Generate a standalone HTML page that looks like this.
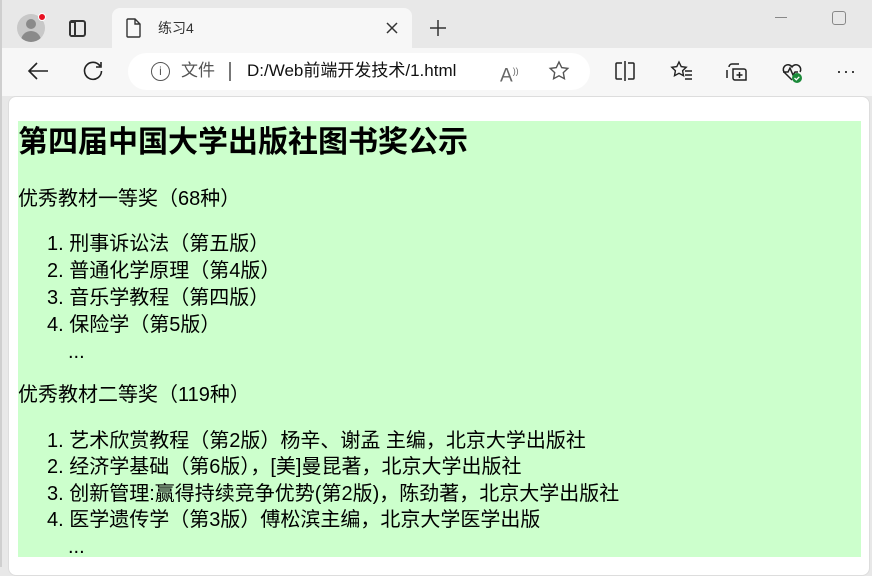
<!DOCTYPE html>
<html><head><meta charset="utf-8"><style>
*{margin:0;padding:0;box-sizing:border-box}
body{width:872px;height:567px;overflow:hidden;background:#e8e8e8;font-family:"Liberation Sans","Noto Sans CJK SC",sans-serif;position:relative}
.a{position:absolute}
.t{position:absolute;white-space:nowrap;font-size:20px;color:#000;line-height:22px}
svg{position:absolute}
</style></head><body>
<div class="a" style="left:0;top:0;width:872px;height:48px;background:#e8e8e8"></div>
<div class="a" style="left:0;top:0;width:2px;height:567px;background:#cfcfcf"></div>
<div class="a" style="left:17px;top:14px;width:28px;height:28px;border-radius:50%;background:#c8c8c8;overflow:hidden">
 <div class="a" style="left:9px;top:5px;width:10px;height:10px;border-radius:50%;background:#8a8a8a"></div>
 <div class="a" style="left:4px;top:17px;width:20px;height:14px;border-radius:10px 10px 0 0;background:#8a8a8a"></div>
</div>
<div class="a" style="left:38px;top:13px;width:8px;height:8px;border-radius:50%;background:#e81123;border:1px solid #fff"></div>
<div class="a" style="left:69px;top:20px;width:17px;height:17px;border:2px solid #333;border-radius:3px"></div>
<div class="a" style="left:69px;top:20px;width:7px;height:17px;background:#333;border-radius:3px 0 0 3px"></div>
<div class="a" style="left:71px;top:23px;width:3px;height:12px;background:#e8e8e8"></div>
<div class="a" style="left:112px;top:8px;width:300px;height:40px;background:#f7f7f7;border-radius:8px 8px 0 0"></div>
<svg style="left:126px;top:18px" width="16" height="20" viewBox="0 0 16 20"><path d="M2 1h7l5 5v12a1 1 0 0 1-1 1H2a1 1 0 0 1-1-1V2a1 1 0 0 1 1-1zM9 1v5h5" fill="none" stroke="#333" stroke-width="1.4"/></svg>
<div class="t" style="left:158px;top:19px;font-size:14px;color:#333;line-height:18px">练习4</div>
<svg style="left:386px;top:22px" width="12" height="12"><path d="M1 1L11 11M11 1L1 11" stroke="#333" stroke-width="1.5"/></svg>
<svg style="left:429px;top:19px" width="18" height="18"><path d="M9 1V17M1 9H17" stroke="#333" stroke-width="1.5"/></svg>
<div class="a" style="left:775px;top:17px;width:12px;height:1px;background:#888"></div>
<div class="a" style="left:832px;top:11px;width:14px;height:14px;border:1.5px solid #888;border-radius:3px"></div>
<div class="a" style="left:2px;top:48px;width:870px;height:48px;background:#f7f7f7"></div>
<svg style="left:27px;top:62px" width="22" height="18"><path d="M21 9H2M10 1L2 9l8 8" fill="none" stroke="#222" stroke-width="1.6"/></svg>
<svg style="left:82px;top:60px" width="22" height="22"><path d="M18 6A8.5 8.5 0 1 0 19.5 11M19 2v5h-5" fill="none" stroke="#222" stroke-width="1.6"/></svg>
<div class="a" style="left:128px;top:53px;width:462px;height:37px;background:#fff;border-radius:19px"></div>
<div class="a" style="left:151px;top:62px;width:19px;height:19px;border:1.4px solid #555;border-radius:50%;font-size:12px;line-height:16px;text-align:center;color:#555">i</div>
<div class="t" style="left:181px;top:61px;font-size:17px;color:#555;line-height:20px">文件</div>
<div class="a" style="left:229px;top:62px;width:1.5px;height:19px;background:#777"></div>
<div class="t" style="left:247px;top:61px;font-size:17px;color:#111;line-height:20px">D:/Web前端开发技术/1.html</div>
<div class="t" style="left:500px;top:60px;font-size:19px;color:#666">A<sup style="font-size:9px">))</sup></div>
<svg style="left:548px;top:60px" width="22" height="22"><path d="M11 2l2.7 5.6 6.1.8-4.5 4.2 1.1 6.1L11 15.8l-5.4 2.9 1.1-6.1L2.2 8.4l6.1-.8z" fill="none" stroke="#555" stroke-width="1.4"/></svg>
<svg style="left:614px;top:61px" width="22" height="20"><path d="M8 2H3a1 1 0 0 0-1 1v14a1 1 0 0 0 1 1h5M14 2h5a1 1 0 0 1 1 1v14a1 1 0 0 1-1 1h-5M11 0v20" fill="none" stroke="#222" stroke-width="1.5"/></svg>
<svg style="left:670px;top:60px" width="24" height="22"><path d="M9 2l2.2 4.6 5 .7-3.6 3.4.9 5L9 13.3l-4.5 2.4.9-5L1.8 7.3l5-.7zM15 11h7M15 15h7M15 19h7" fill="none" stroke="#222" stroke-width="1.4"/></svg>
<svg style="left:725px;top:60px" width="24" height="24"><path d="M4 7a3 3 0 0 1 3-3h7M2 10v8M8 9h11a2 2 0 0 1 2 2v9H10a2 2 0 0 1-2-2zM14.5 12v6M11.5 15h6" fill="none" stroke="#222" stroke-width="1.5"/></svg>
<svg style="left:780px;top:60px" width="24" height="24"><path d="M12 20L4 12a4.5 4.5 0 0 1 8-5 4.5 4.5 0 0 1 8 5M3 12h5l2-4 3 7 2-3h3" fill="none" stroke="#222" stroke-width="1.5"/><circle cx="17" cy="18" r="5" fill="#1c8a3a"/><path d="M14.5 18l1.8 1.8 3-3" fill="none" stroke="#fff" stroke-width="1.3"/></svg>
<div class="t" style="left:836px;top:60px;font-size:18px;color:#222;letter-spacing:1px">···</div>
<div class="a" style="left:8px;top:96px;width:862px;height:480px;background:#fff;border-radius:8px;border:1px solid #ddd"></div>
<div class="a" style="left:18px;top:121px;width:843px;height:436px;background:#ccffcc"></div>
<div class="t" style="left:18px;top:126px;font-size:30px;font-weight:bold;line-height:34px">第四届中国大学出版社图书奖公示</div>
<div class="t" style="left:18px;top:188px">优秀教材一等奖（68种）</div>
<div class="t" style="left:47px;top:233px">1. 刑事诉讼法（第五版）</div>
<div class="t" style="left:47px;top:260px">2. 普通化学原理（第4版）</div>
<div class="t" style="left:47px;top:287px">3. 音乐学教程（第四版）</div>
<div class="t" style="left:47px;top:314px">4. 保险学（第5版）</div>
<div class="t" style="left:68px;top:341px">...</div>
<div class="t" style="left:18px;top:384px">优秀教材二等奖（119种）</div>
<div class="t" style="left:47px;top:430px">1. 艺术欣赏教程（第2版）杨辛、谢孟 主编，北京大学出版社</div>
<div class="t" style="left:47px;top:456px">2. 经济学基础（第6版），[美]曼昆著，北京大学出版社</div>
<div class="t" style="left:47px;top:483px">3. 创新管理:赢得持续竞争优势(第2版)，陈劲著，北京大学出版社</div>
<div class="t" style="left:47px;top:509px">4. 医学遗传学（第3版）傅松滨主编，北京大学医学出版</div>
<div class="t" style="left:68px;top:536px">...</div>
</body></html>
